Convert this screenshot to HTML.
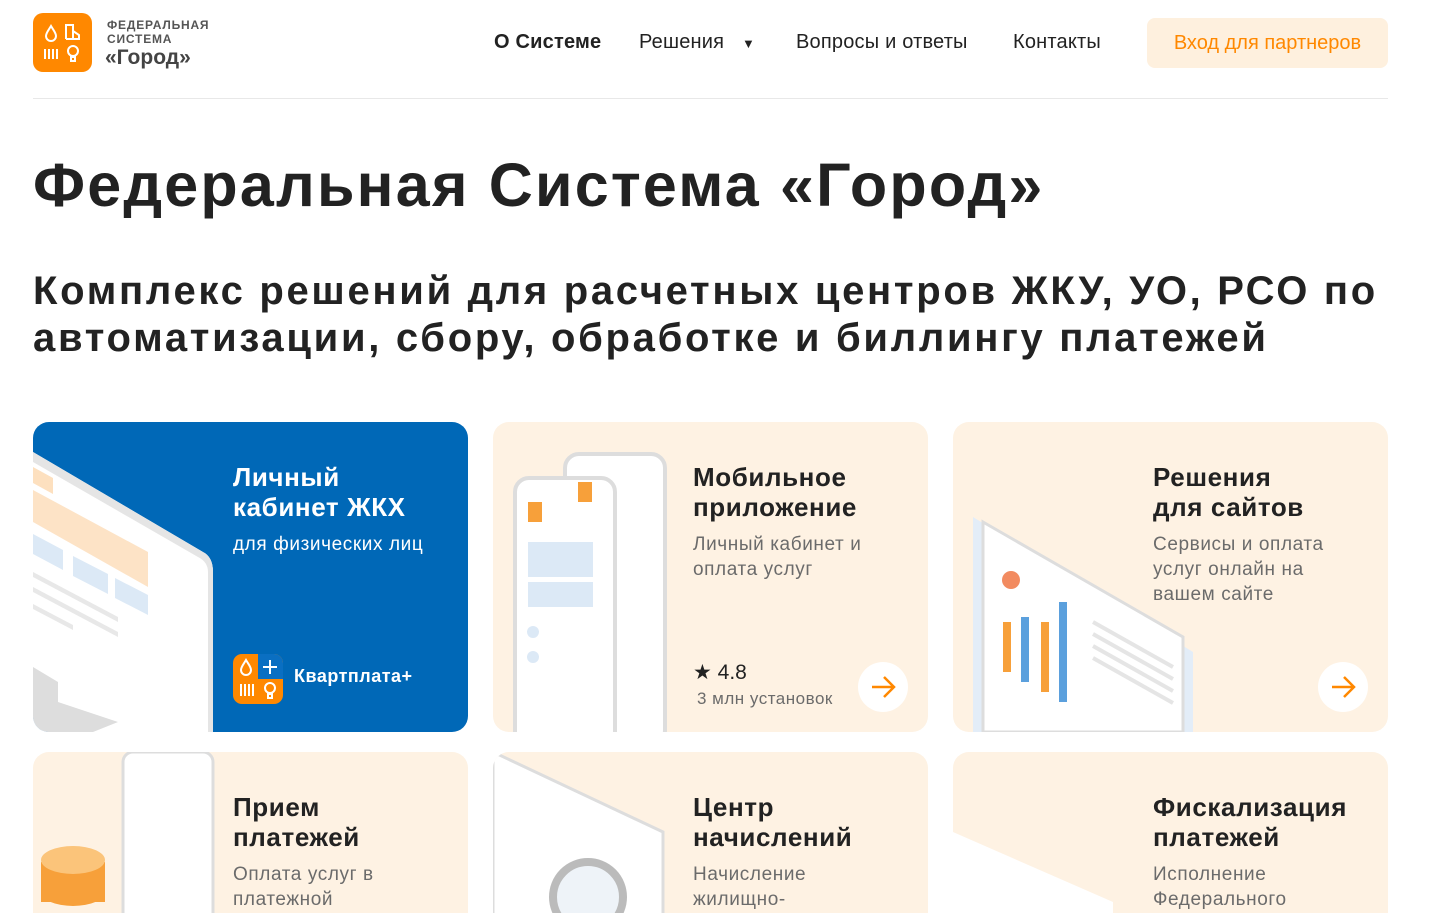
<!DOCTYPE html>
<html><head><meta charset="utf-8"><style>
*{margin:0;padding:0;box-sizing:border-box}
html,body{width:1437px;height:913px;overflow:hidden}
body{background:#fff;font-family:"Liberation Sans",sans-serif;color:#1f1f1f;position:relative}
.abs{position:absolute}
.nav a{position:absolute;top:31px;font-size:20px;color:#222;text-decoration:none;letter-spacing:0.2px}
.card{position:absolute;width:435px;height:310px;border-radius:16px;background:#fef2e3;overflow:hidden}
.card.r2{height:161px;border-radius:16px 16px 0 0}
.card h3{position:absolute;left:200px;top:40px;font-size:26px;line-height:30px;font-weight:bold;color:#222;letter-spacing:0.6px}
.card p{position:absolute;left:200px;font-size:19px;line-height:25px;color:#6b6b6b;letter-spacing:0.6px}
.arrow{position:absolute;right:20px;top:240px;width:50px;height:50px;border-radius:50%;background:#fff}
</style></head><body>
<div class="abs" style="left:33px;top:13px;width:59px;height:59px;border-radius:10px;background:#ff8800">
<svg width="59" height="59" viewBox="0 0 59 59" fill="none" stroke="#fff" stroke-width="2">
<path d="M18 13c-3 5-5 7-5 10a5 5 0 0 0 10 0c0-3-2-5-5-10z"/>
<path d="M33 26V12h7v14M40 18l6 4v4h-13"/>
<path d="M12 36v10M16 36v10M20 36v10M24 36v10"/>
<circle cx="40" cy="38" r="5"/><path d="M38 44h4v4h-4z"/>
</svg></div>
<div class="abs" style="left:107px;top:18px;font-size:12px;font-weight:bold;color:#555;line-height:14px;letter-spacing:0.8px">ФЕДЕРАЛЬНАЯ<br>СИСТЕМА</div>
<div class="abs" style="left:105px;top:46px;font-size:21px;font-weight:bold;color:#444">«Город»</div>
<div class="nav">
<a style="left:494px;font-weight:bold">О Системе</a>
<a style="left:639px">Решения <span style="font-size:13px;margin-left:12px">▼</span></a>
<a style="left:796px">Вопросы и ответы</a>
<a style="left:1013px">Контакты</a>
</div>
<div class="abs" style="left:1147px;top:18px;width:241px;height:50px;border-radius:8px;background:#fef0de;color:#ff8800;font-size:20px;text-align:center;line-height:50px">Вход для партнеров</div>
<div class="abs" style="left:33px;top:98px;width:1355px;height:1px;background:#e8e8e8"></div>
<div class="abs" style="left:33px;top:150px;font-size:61px;font-weight:bold;color:#222;letter-spacing:2.2px;white-space:nowrap">Федеральная Система «Город»</div>
<div class="abs" style="left:33px;top:268px;width:1404px;font-size:40px;line-height:47px;font-weight:bold;color:#222;letter-spacing:2.7px;white-space:nowrap">Комплекс решений для расчетных центров ЖКУ, УО, РСО по<br>автоматизации, сбору, обработке и биллингу платежей</div>

<div class="card" style="left:33px;top:422px;background:#0068b7">
<svg class="abs" style="left:0;top:0" width="200" height="310">
<path d="M0 30L170 130Q180 135 180 150V310H0Z" fill="#fff"/>
<path d="M0 30L170 130Q180 135 180 150V310H175V150Q175 140 165 135L0 40Z" fill="#e5e5e5"/>
<path d="M0 45L20 56V72L0 61Z" fill="#fde0bf"/>
<path d="M0 68L115 130V165L0 100Z" fill="#fde3c6"/>
<path d="M0 112L30 128V148L0 132ZM40 134L75 152V172L40 154ZM82 156L115 173V193L82 176Z" fill="#dce9f6"/>
<path d="M0 150L85 195V200L0 155ZM0 165L85 210V215L0 170ZM0 182L40 203V208L0 187Z" fill="#e8e8e8"/>
<path d="M0 245L25 260V280L85 300L60 310H0Z" fill="#ddd"/>
</svg>
<h3 style="color:#fff">Личный<br>кабинет ЖКХ</h3>
<p style="top:110px;color:#fff">для физических лиц</p>
<svg class="abs" style="left:200px;top:232px" width="50" height="50" viewBox="0 0 50 50">
<rect width="50" height="50" rx="9" fill="#ff8800"/><path d="M25 0h16a9 9 0 0 1 9 9v16H25Z" fill="#0a6fc2"/>
<g stroke="#fff" stroke-width="2" fill="none"><path d="M37 6v14M30 13h14"/><path d="M13 6c-3 5-5 7-5 10a5 5 0 0 0 10 0c0-3-2-5-5-10z"/><path d="M8 30v12M12 30v12M16 30v12M20 30v12"/><circle cx="37" cy="34" r="5"/><path d="M35 40h4v4h-4z"/></g></svg>
<div class="abs" style="left:261px;top:244px;color:#fff;font-weight:bold;font-size:18px;letter-spacing:0.5px">Квартплата+</div>
</div>

<div class="card" style="left:493px;top:422px">
<svg class="abs" style="left:0;top:0" width="200" height="310">
<rect x="72" y="32" width="100" height="290" rx="14" fill="#fff" stroke="#ddd" stroke-width="4"/>
<rect x="22" y="56" width="100" height="270" rx="14" fill="#fff" stroke="#ddd" stroke-width="4"/>
<rect x="35" y="80" width="14" height="20" fill="#f7a03a"/><rect x="85" y="60" width="14" height="20" fill="#f7a03a"/>
<rect x="35" y="120" width="65" height="35" fill="#dce9f6"/><rect x="35" y="160" width="65" height="25" fill="#dce9f6"/>
<circle cx="40" cy="210" r="6" fill="#dce9f6"/><circle cx="40" cy="235" r="6" fill="#dce9f6"/>
</svg>
<h3>Мобильное<br>приложение</h3>
<p style="top:110px">Личный кабинет и<br>оплата услуг</p>
<div class="abs" style="left:200px;top:238px;font-size:21px;color:#222">★ 4.8</div>
<div class="abs" style="left:204px;top:267px;font-size:17px;color:#6b6b6b;letter-spacing:0.5px">3 млн установок</div>
<div class="arrow"><svg width="50" height="50"><path d="M14 25h22M26 15l10 10-10 10" stroke="#ff8800" stroke-width="2.5" fill="none"/></svg></div>
</div>

<div class="card" style="left:953px;top:422px">
<svg class="abs" style="left:0;top:0" width="280" height="310">
<path d="M20 95L240 230V310H20Z" fill="#e3edf8"/>
<path d="M30 100L230 215V310H30Z" fill="#fff" stroke="#ddd" stroke-width="3"/>
<circle cx="58" cy="158" r="9" fill="#f28b60"/>
<rect x="50" y="200" width="8" height="50" fill="#f7a03a"/><rect x="68" y="195" width="8" height="65" fill="#5ba0dd"/>
<rect x="88" y="200" width="8" height="70" fill="#f7a03a"/><rect x="106" y="180" width="8" height="100" fill="#5ba0dd"/>
<path d="M140 200L220 245M140 212L220 257M140 224L220 269M140 236L220 281" stroke="#e5e5e5" stroke-width="4"/>
</svg>
<h3>Решения<br>для сайтов</h3>
<p style="top:110px">Сервисы и оплата<br>услуг онлайн на<br>вашем сайте</p>
<div class="arrow"><svg width="50" height="50"><path d="M14 25h22M26 15l10 10-10 10" stroke="#ff8800" stroke-width="2.5" fill="none"/></svg></div>
</div>

<div class="card r2" style="left:33px;top:752px">
<svg class="abs" style="left:0;top:0" width="200" height="170">
<rect x="90" y="0" width="90" height="180" rx="10" fill="#fff" stroke="#ddd" stroke-width="3"/>
<ellipse cx="40" cy="140" rx="32" ry="14" fill="#f7a03a"/><rect x="8" y="110" width="64" height="40" fill="#f7a03a"/><ellipse cx="40" cy="108" rx="32" ry="14" fill="#fbc47a"/>
</svg>
<h3>Прием<br>платежей</h3>
<p style="top:110px">Оплата услуг в<br>платежной</p>
</div>
<div class="card r2" style="left:493px;top:752px">
<svg class="abs" style="left:0;top:0" width="200" height="170">
<path d="M0 0L170 80V170H0Z" fill="#fff" stroke="#ddd" stroke-width="3"/>
<circle cx="95" cy="145" r="35" fill="#eef3f8" stroke="#bbb" stroke-width="8"/>
</svg>
<h3>Центр<br>начислений</h3>
<p style="top:110px">Начисление<br>жилищно-</p>
</div>
<div class="card r2" style="left:953px;top:752px">
<svg class="abs" style="left:0;top:0" width="200" height="170"><path d="M0 80L160 150V170H0Z" fill="#fff"/></svg>
<h3>Фискализация<br>платежей</h3>
<p style="top:110px">Исполнение<br>Федерального</p>
</div>
</body></html>
